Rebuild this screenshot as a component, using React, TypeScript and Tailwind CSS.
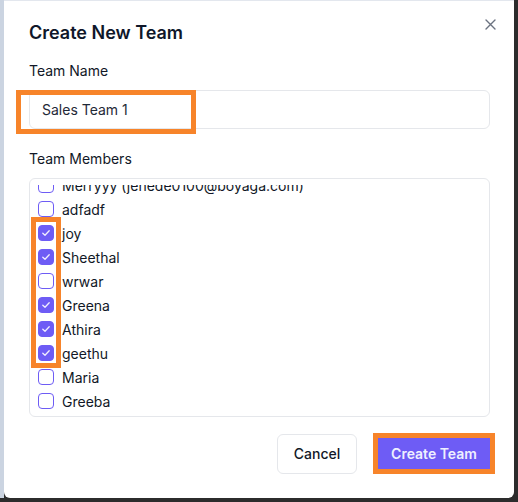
import { useState } from "react";

const members = [
  { name: "Merryyy (jenede0100@boyaga.com)", checked: false },
  { name: "adfadf", checked: false },
  { name: "joy", checked: true },
  { name: "Sheethal", checked: true },
  { name: "wrwar", checked: false },
  { name: "Greena", checked: true },
  { name: "Athira", checked: true },
  { name: "geethu", checked: true },
  { name: "Maria", checked: false },
  { name: "Greeba", checked: false },
];

function Box({ checked }: { checked: boolean }) {
  return (
    <span
      className={
        checked
          ? "w-4 h-4 shrink-0 rounded-[4px] border-[1.5px] border-[#6e5cf5] bg-[#6e5cf5] flex items-center justify-center"
          : "w-4 h-4 shrink-0 rounded-[4px] border-[1.5px] border-[#6e5cf5] bg-white"
      }
    >
      {checked && (
        <svg width="10" height="10" viewBox="0 0 10 10" fill="none">
          <polyline points="1.8,5.2 4,7.3 8.2,2.8" stroke="#f1eeff" strokeWidth="1.3" strokeLinecap="round" strokeLinejoin="round" />
        </svg>
      )}
    </span>
  );
}

export default function App() {
  const [name, setName] = useState("Sales Team 1");

  return (
    <div className="w-[518px] h-[502px] bg-[#2c2c2c] flex flex-col font-['Inter',sans-serif] overflow-hidden">
      <div className="flex h-[498px]">
        <div className="w-[4px] bg-[#cbd4e1]" />
        <div className="relative w-[510px] bg-white rounded-b-[6px] border-t border-[#e3e7ee] pl-[25px] pr-[24px] pt-[18px] flex flex-col">
          <button className="absolute right-[18px] top-[18px] text-[#6b7280]">
            <svg width="11" height="11" viewBox="0 0 11 11" fill="none">
              <path d="M1 1L10 10M10 1L1 10" stroke="currentColor" strokeWidth="1.4" strokeLinecap="round" />
            </svg>
          </button>

          <h2 className="text-[18px] leading-[28px] font-semibold text-[#0f172a]">Create New Team</h2>

          <label className="mt-[14px] text-[14px] leading-[20px] font-normal text-[#111827]">Team Name</label>
          <div className="relative mt-[9px]">
            <input
              value={name}
              onChange={(e) => setName(e.target.value)}
              className="w-full h-[39px] rounded-md border border-[#e5e7eb] px-[12px] text-[14px] text-[#1f2937] outline-none"
            />
            <div className="absolute left-[-13px] top-0 w-[180px] h-[44px] border-[5px] border-[#f7842a] pointer-events-none" />
          </div>

          <label className="mt-[20px] text-[14px] leading-[20px] font-normal text-[#111827]">Team Members</label>
          <div className="relative mt-[9px] h-[239px] rounded-md border border-[#e5e7eb] px-[8px] pt-[6px] pb-[4px]">
            <div className="h-full overflow-hidden">
              <div className="-mt-[12px] flex flex-col">
                {members.map((m) => (
                  <div key={m.name} className="h-[24px] flex items-center gap-[8px]">
                    <Box checked={m.checked} />
                    <span className="text-[14px] text-[#111827] whitespace-nowrap">{m.name}</span>
                  </div>
                ))}
              </div>
            </div>
            <div className="absolute left-[1px] top-[38px] w-[30px] h-[151px] border-[5px] border-[#f7842a] pointer-events-none" />
          </div>

          <div className="mt-[16px] flex items-center justify-end">
            <button className="w-[80px] h-[40px] rounded-md border border-[#e5e7eb] bg-white text-[14px] font-medium text-[#111827]">
              Cancel
            </button>
            <button className="ml-[16px] -mr-[5px] w-[122px] h-[41px] border-[5px] border-[#f7842a] bg-[#6e5cf5] text-[14px] font-semibold text-[#eef0ff]">
              Create Team
            </button>
          </div>
        </div>
        <div className="flex-1 bg-[#2c2c2c]" />
      </div>
    </div>
  );
}
